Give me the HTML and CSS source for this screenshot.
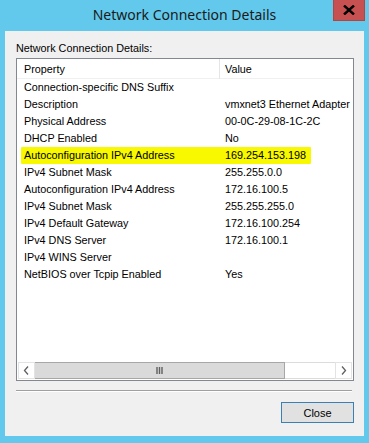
FILE: index.html
```html
<!DOCTYPE html>
<html lang="en">
<head>
    <meta charset="UTF-8">
    <title>Network Connection Details</title>
    <link rel="stylesheet" href="styles.css">
</head>
<body>
    <div class="window">
        <div class="titlebar">
            <span></span>
            <h1 class="title">Network Connection Details</h1>
            <button class="close-x">
                <svg width="12" height="10" viewBox="0 0 12 10"><path d="M1 0.5 L11 9.5 M11 0.5 L1 9.5" stroke="#000" stroke-width="2.4"/></svg>
            </button>
        </div>

        <div class="client">
            <p class="caption">Network Connection Details:</p>

            <div class="listbox">
                <div class="list-header">
                    <div class="col-prop">Property</div>
                    <div class="col-val">Value</div>
                </div>
                <div class="rows">
                    <div class="row"><div class="col-prop">Connection-specific DNS Suffix</div><div class="col-val"></div></div>
                    <div class="row"><div class="col-prop">Description</div><div class="col-val">vmxnet3 Ethernet Adapter</div></div>
                    <div class="row"><div class="col-prop">Physical Address</div><div class="col-val">00-0C-29-08-1C-2C</div></div>
                    <div class="row"><div class="col-prop">DHCP Enabled</div><div class="col-val">No</div></div>
                    <div class="row marked"><div class="col-prop">Autoconfiguration IPv4 Address</div><div class="col-val">169.254.153.198</div></div>
                    <div class="row"><div class="col-prop">IPv4 Subnet Mask</div><div class="col-val">255.255.0.0</div></div>
                    <div class="row"><div class="col-prop">Autoconfiguration IPv4 Address</div><div class="col-val">172.16.100.5</div></div>
                    <div class="row"><div class="col-prop">IPv4 Subnet Mask</div><div class="col-val">255.255.255.0</div></div>
                    <div class="row"><div class="col-prop">IPv4 Default Gateway</div><div class="col-val">172.16.100.254</div></div>
                    <div class="row"><div class="col-prop">IPv4 DNS Server</div><div class="col-val">172.16.100.1</div></div>
                    <div class="row"><div class="col-prop">IPv4 WINS Server</div><div class="col-val"></div></div>
                    <div class="row"><div class="col-prop">NetBIOS over Tcpip Enabled</div><div class="col-val">Yes</div></div>
                </div>

                <div class="hscroll">
                    <div class="arrow">
                        <svg width="7" height="9" viewBox="0 0 7 9"><path d="M5 0.5 L1.5 4.5 L5 8.5" fill="none" stroke="#606060" stroke-width="1.3"/></svg>
                    </div>
                    <div class="thumb">
                        <svg width="7" height="7" viewBox="0 0 7 7"><path d="M1 0 V7 M3.5 0 V7 M6 0 V7" stroke="#606060" stroke-width="1.4"/></svg>
                    </div>
                    <div class="track"></div>
                    <div class="arrow">
                        <svg width="7" height="9" viewBox="0 0 7 9"><path d="M2 0.5 L5.5 4.5 L2 8.5" fill="none" stroke="#606060" stroke-width="1.3"/></svg>
                    </div>
                </div>
            </div>

            <hr class="divider">

            <div class="actions">
                <button class="btn">Close</button>
            </div>
        </div>
    </div>
</body>
</html>
```

FILE: styles.css
```css
body {
    margin: 0;
    padding: 0;
    background-color: #62c9ec;
    font-family: 'Liberation Sans', Arial, sans-serif;
    font-size: 10.8px;
    color: #000000;
}

.window {
    width: 369px;
    height: 443px;
    display: flex;
    flex-direction: column;
}

.titlebar {
    height: 31px;
    display: grid;
    grid-template-columns: 1fr auto 1fr;
    align-items: start;
}

.title {
    margin: 0;
    padding-top: 5px;
    font-family: 'Noto Sans', sans-serif;
    font-weight: normal;
    font-size: 14px;
    line-height: 20px;
    color: #1a1a1a;
}

.close-x {
    justify-self: end;
    margin-right: 4px;
    width: 32px;
    height: 21px;
    padding: 0;
    border: 1px solid #b0463c;
    border-top: none;
    background-color: #c75050;
    display: flex;
    align-items: center;
    justify-content: center;
}

.client {
    margin: 0 5px 7px 5px;
    height: 405px;
    background-color: #f0f0f0;
    padding: 10px 10px 0 11px;
    box-sizing: border-box;
}

.caption {
    margin: 0 0 3px 0;
    line-height: 14px;
    height: 14px;
}

.listbox {
    height: 323px;
    box-sizing: border-box;
    border: 1px solid #828790;
    background-color: #ffffff;
    display: flex;
    flex-direction: column;
}

.list-header {
    height: 20px;
    display: flex;
    align-items: center;
    border-bottom: 1px solid #f0f0f0;
    box-sizing: border-box;
}

.list-header .col-prop {
    border-right: 1px solid #e5e5e5;
    height: 20px;
    line-height: 20px;
}

.col-prop {
    width: 203px;
    flex-shrink: 0;
    padding-left: 7px;
    box-sizing: border-box;
    white-space: nowrap;
}

.col-val {
    padding-left: 5px;
    white-space: nowrap;
}

.rows {
    flex: 1;
}

.row {
    height: 17px;
    line-height: 17px;
    display: flex;
}

.row.marked {
    margin-left: 4px;
    width: 290px;
    background-color: #f8f800;
    border-radius: 1px;
}

.row.marked .col-prop {
    width: 199px;
    padding-left: 3px;
}

.hscroll {
    height: 17px;
    margin: 0 1px 1px 1px;
    display: flex;
}

.arrow {
    width: 17px;
    box-sizing: border-box;
    border: 1px solid #e3e3e3;
    background-color: #ffffff;
    display: flex;
    align-items: center;
    justify-content: center;
}

.thumb {
    width: 250px;
    box-sizing: border-box;
    background-color: #dadada;
    border: 1px solid #a7a7a7;
    border-left: none;
    display: flex;
    align-items: center;
    justify-content: center;
}

.track {
    flex: 1;
    background-color: #ffffff;
    border-top: 1px solid #dcdcdc;
    border-bottom: 1px solid #dcdcdc;
}

.divider {
    margin: 9px 2px 0 0;
    border: none;
    border-top: 1px solid #a0a0a0;
    border-bottom: 1px solid #ffffff;
}

.actions {
    display: flex;
    justify-content: flex-end;
    margin-top: 10px;
}

.btn {
    width: 73px;
    height: 21px;
    padding: 0;
    font-family: 'Liberation Sans', Arial, sans-serif;
    font-size: 11px;
    color: #000000;
    background-color: #e1e1e1;
    border: 1px solid #3c7fb1;
}
```
